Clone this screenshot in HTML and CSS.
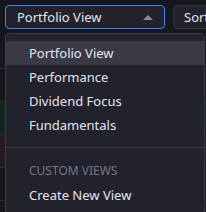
FILE: index.html
```html
<!DOCTYPE html>
<html>
<head>
<meta charset="utf-8">
<link rel="stylesheet" href="styles.css">
</head>
<body>
<div class="page">
  <div class="toolbar">
    <div class="select">
      <span class="select-label">Portfolio View</span>
      <span class="caret"></span>
    </div>
    <div class="sort">Sort by</div>
  </div>
  <div class="table">
    <div class="row row-dark"></div>
    <div class="row row-green"></div>
    <div class="row row-red"></div>
    <div class="row row-dark"></div>
    <div class="row row-dark"></div>
    <div class="row row-dark"></div>
  </div>
  <div class="menu">
    <div class="item active">Portfolio View</div>
    <div class="item">Performance</div>
    <div class="item">Dividend Focus</div>
    <div class="item">Fundamentals</div>
    <div class="divider"></div>
    <div class="group">CUSTOM VIEWS</div>
    <div class="item">Create New View</div>
  </div>
</div>
</body>
</html>
```
FILE: styles.css
```css
html, body {
  margin: 0;
  padding: 0;
  background: #16161d;
  font-family: "Noto Sans", "Open Sans", sans-serif;
  overflow: hidden;
}
.page {
  position: relative;
  width: 206px;
  height: 212px;
  overflow: hidden;
}
.toolbar {
  display: flex;
  gap: 8px;
  padding: 5px 0 0 5px;
}
.select {
  flex-shrink: 0;
  box-sizing: border-box;
  width: 160px;
  height: 24px;
  border: 1px solid #3b82f6;
  border-radius: 4px;
  background: #22222c;
  display: flex;
  align-items: center;
  padding: 0 11px;
  justify-content: space-between;
}
.select-label {
  color: #e4e4ec;
  font-size: 13px;
}
.caret {
  width: 0;
  height: 0;
  border-left: 5px solid transparent;
  border-right: 5px solid transparent;
  border-bottom: 5px solid #8a8a96;
}
.sort {
  flex-shrink: 0;
  box-sizing: border-box;
  height: 24px;
  border: 1px solid #34343f;
  border-radius: 4px;
  background: #22222c;
  color: #e4e4ec;
  font-size: 13px;
  padding: 0 10px;
  display: flex;
  align-items: center;
  white-space: nowrap;
}
.table {
  margin-top: 39px;
  display: flex;
  flex-direction: column;
}
.row {
  height: 32px;
  border-top: 1px solid #2a2a33;
}
.row-green { background: #10241e; }
.row-red { background: #28181f; }
.menu {
  position: absolute;
  top: 33px;
  left: 5px;
  width: 200px;
  height: 190px;
  box-sizing: border-box;
  background: #22222c;
  border: 1px solid #393944;
  border-radius: 4px;
  padding-top: 7px;
}
.item {
  height: 24px;
  line-height: 24px;
  padding-left: 23px;
  color: #e4e4ec;
  font-size: 13px;
}
.item.active {
  background: #3a3a47;
}
.divider {
  height: 1px;
  background: #3a3a46;
  margin: 10px 0 11px;
}
.group {
  height: 24px;
  line-height: 24px;
  padding-left: 23px;
  color: #767684;
  font-size: 12px;
}
```
